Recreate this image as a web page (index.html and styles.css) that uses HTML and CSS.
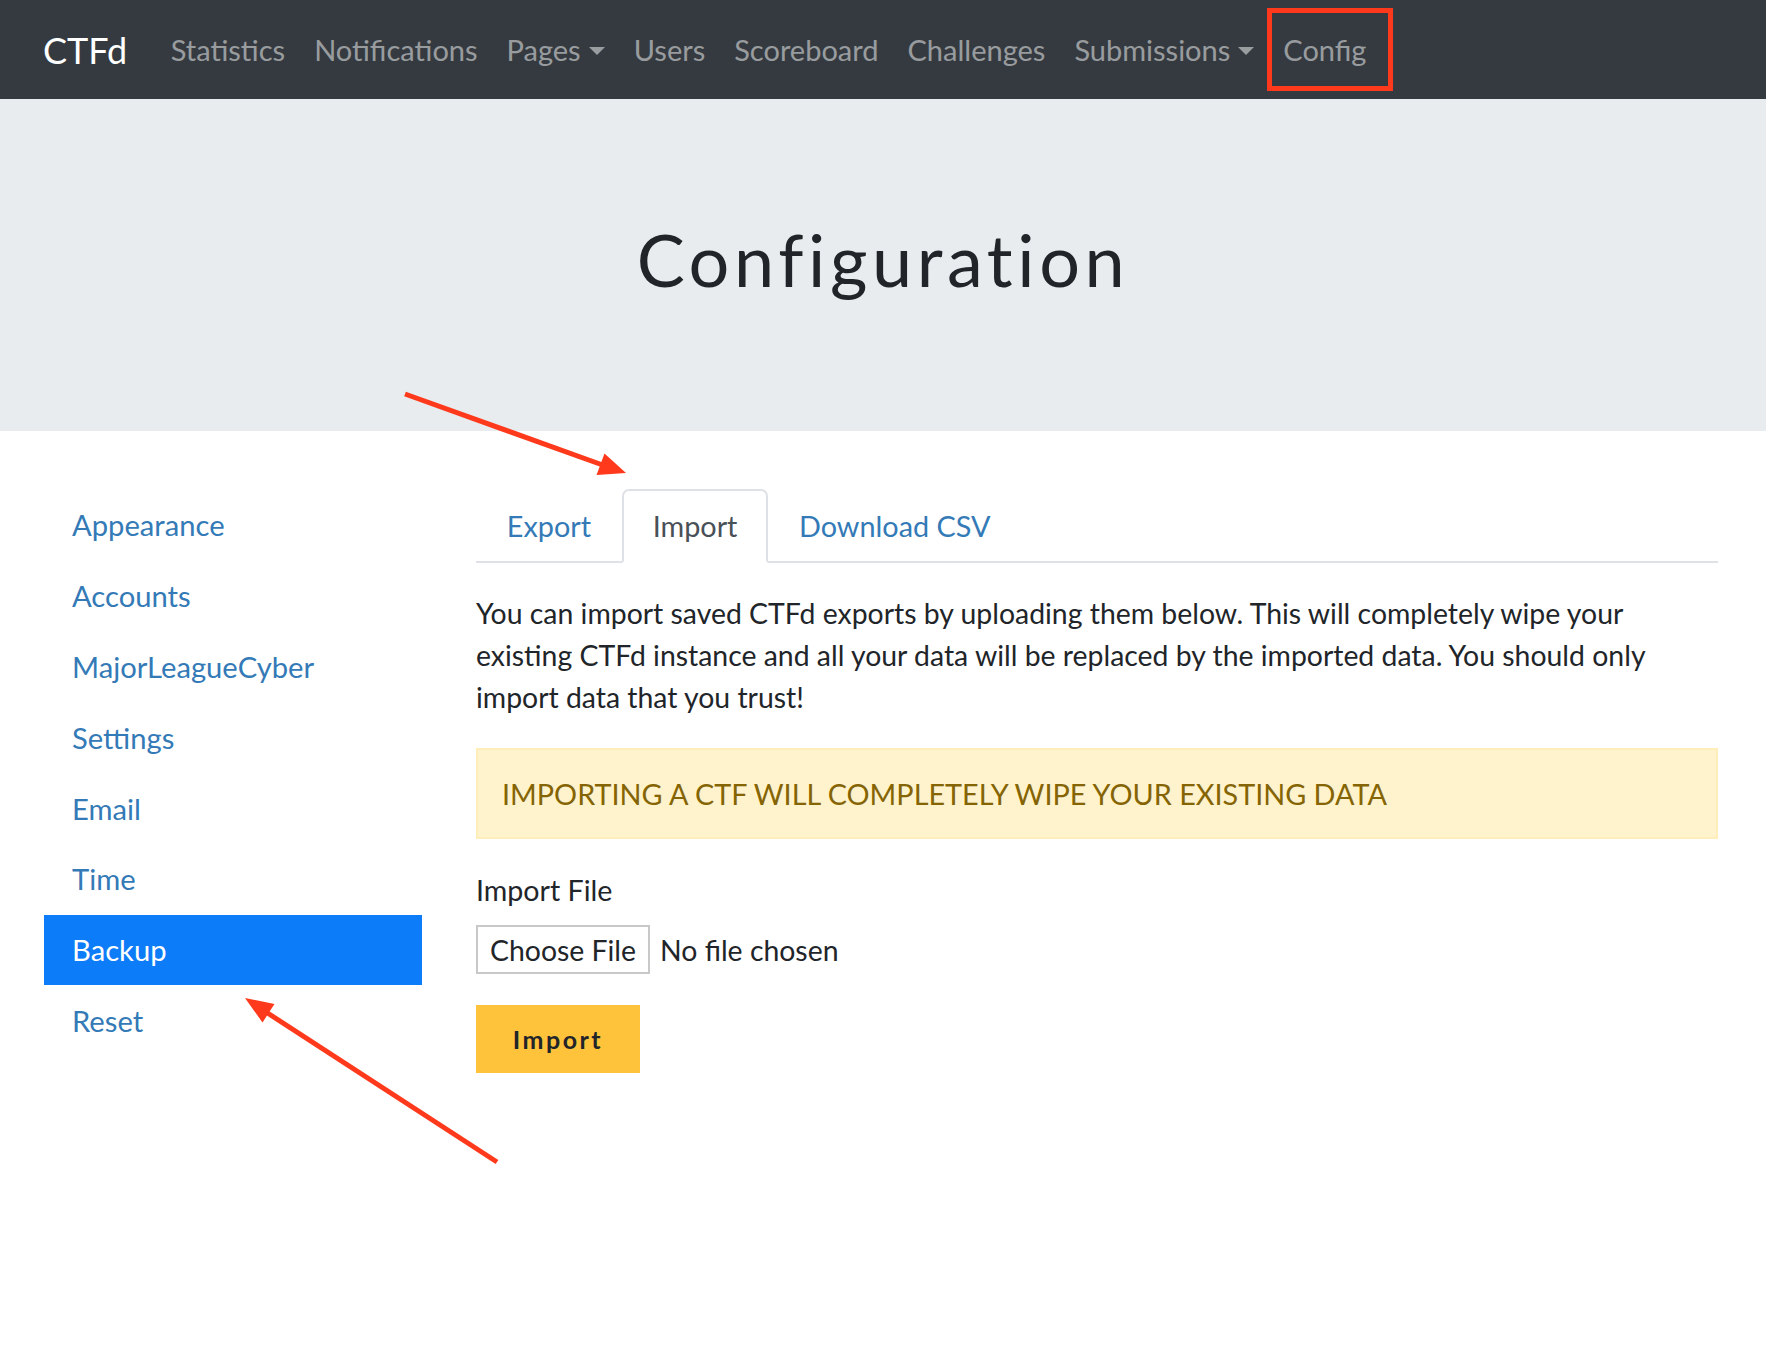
FILE: index.html
```html
<!DOCTYPE html>
<html lang="en">
<head>
<meta charset="utf-8">
<title>CTFd Admin - Configuration</title>
<link rel="stylesheet" href="styles.css">
</head>
<body>
<nav class="navbar">
  <a class="brand" href="#">CTFd</a>
  <ul class="nav-items">
    <li><a class="nav-link" href="#">Statistics</a></li>
    <li><a class="nav-link" href="#">Notifications</a></li>
    <li><a class="nav-link dropdown" href="#">Pages</a></li>
    <li><a class="nav-link" href="#">Users</a></li>
    <li><a class="nav-link" href="#">Scoreboard</a></li>
    <li><a class="nav-link" href="#">Challenges</a></li>
    <li><a class="nav-link dropdown" href="#">Submissions</a></li>
    <li><a class="nav-link" href="#">Config</a></li>
  </ul>
</nav>

<header class="jumbotron">
  <h1 class="title">Configuration</h1>
</header>

<main class="content">
  <aside class="sidebar">
    <a class="side-link" href="#">Appearance</a>
    <a class="side-link" href="#">Accounts</a>
    <a class="side-link" href="#">MajorLeagueCyber</a>
    <a class="side-link" href="#">Settings</a>
    <a class="side-link" href="#">Email</a>
    <a class="side-link" href="#">Time</a>
    <a class="side-link active" href="#">Backup</a>
    <a class="side-link" href="#">Reset</a>
  </aside>

  <section class="panel">
    <ul class="tabs">
      <li><a class="tab" href="#">Export</a></li>
      <li><a class="tab active" href="#">Import</a></li>
      <li><a class="tab" href="#">Download CSV</a></li>
    </ul>
    <div class="tab-content">
      <p class="lead-text">You can import saved CTFd exports by uploading them below. This will completely wipe your existing CTFd instance and all your data will be replaced by the imported data. You should only import data that you trust!</p>
      <div class="alert">IMPORTING A CTF WILL COMPLETELY WIPE YOUR EXISTING DATA</div>
      <div class="form-group">
        <div class="label">Import File</div>
        <div class="file-row">
          <span class="file-btn">Choose File</span>
          <span class="file-name">No file chosen</span>
        </div>
      </div>
      <button class="btn-import" type="button">Import</button>
    </div>
  </section>
</main>

<svg class="annotations" width="1766" height="1368" viewBox="0 0 1766 1368" xmlns="http://www.w3.org/2000/svg">
  <rect x="1269.5" y="10.5" width="121" height="78" fill="none" stroke="#ff3a1c" stroke-width="5"/>
  <line x1="405" y1="394" x2="604" y2="465.5" stroke="#ff3a1c" stroke-width="5"/>
  <polygon points="626,473 596.5,475 604.5,453.5" fill="#ff3a1c"/>
  <line x1="497" y1="1162" x2="266" y2="1012" stroke="#ff3a1c" stroke-width="5"/>
  <polygon points="245,998 274.5,1004 262.5,1022.5" fill="#ff3a1c"/>
</svg>
</body>
</html>
```

FILE: styles.css
```css
* {
  box-sizing: border-box;
}

html, body {
  margin: 0;
  padding: 0;
}

body {
  font-family: Lato, "Open Sans", "Liberation Sans", sans-serif;
  color: #212529;
  background: #fff;
  width: 1766px;
  height: 1368px;
  overflow: hidden;
}

a {
  text-decoration: none;
}

ul {
  list-style: none;
  margin: 0;
  padding: 0;
}

/* Navbar */
.navbar {
  height: 99px;
  background: #343a40;
  display: flex;
  align-items: center;
  padding-left: 43px;
}

.brand {
  color: #fff;
  font-size: 36px;
  line-height: 52px;
  margin-right: 29px;
}

.nav-items {
  display: flex;
  align-items: center;
}

.nav-link {
  display: block;
  padding: 0 14.5px;
  font-size: 29px;
  line-height: 42px;
  color: rgba(255, 255, 255, 0.5);
}

.nav-link.dropdown::after {
  content: "";
  display: inline-block;
  margin-left: 8px;
  vertical-align: 6px;
  border-top: 8.5px solid rgba(255, 255, 255, 0.5);
  border-left: 8.5px solid transparent;
  border-right: 8.5px solid transparent;
}

/* Jumbotron */
.jumbotron {
  height: 332px;
  background: #e9ecef;
  display: flex;
  align-items: center;
  justify-content: center;
  padding-bottom: 12px;
}

.title {
  margin: 0;
  font-size: 72px;
  font-weight: 400;
  letter-spacing: 4.6px;
  line-height: 86px;
  color: #212529;
}

/* Content */
.content {
  display: flex;
  padding: 58px 48px 0 44px;
}

.sidebar {
  width: 378px;
  flex: none;
  padding-top: 1px;
  display: flex;
  flex-direction: column;
}

.side-link {
  display: block;
  padding: 14.4px 28px;
  font-size: 29.2px;
  line-height: 42px;
  color: #337ab7;
}

.side-link.active {
  background: #0d7cf8;
  color: #fff;
}

.panel {
  flex: 1;
  margin-left: 54px;
}

.tabs {
  display: flex;
  border-bottom: 2px solid #dee2e6;
}

.tab {
  display: block;
  padding: 14px 28.8px 14px;
  font-size: 28.8px;
  line-height: 42px;
  color: #337ab7;
  border: 2px solid transparent;
  border-radius: 7px 7px 0 0;
  margin-bottom: -2px;
}

.tab.active {
  color: #495057;
  background: #fff;
  border-color: #dee2e6 #dee2e6 #fff;
}

.tab-content {
  padding-top: 29px;
}

.lead-text {
  margin: 0 0 30px;
  font-size: 28.4px;
  line-height: 42px;
}

.alert {
  padding: 22.5px 24px;
  border: 2px solid #ffeeba;
  background: #fff3cd;
  color: #856404;
  font-size: 28.8px;
  line-height: 42px;
  margin-bottom: 30px;
}

.form-group {
  margin-bottom: 31px;
}

.label {
  font-size: 28.6px;
  line-height: 42px;
  margin-bottom: 14px;
}

.file-row {
  display: flex;
  align-items: center;
  font-size: 28.4px;
}

.file-btn {
  display: inline-flex;
  align-items: center;
  height: 49px;
  padding: 0 12px;
  border: 2px solid #c8c8c8;
  background: #fff;
  color: #212529;
}

.file-name {
  margin-left: 10px;
  color: #212529;
}

.btn-import {
  display: block;
  width: 164px;
  height: 68px;
  border: none;
  border-radius: 0;
  background: #ffc23b;
  color: #212529;
  font-family: Lato, "Open Sans", sans-serif;
  font-weight: 700;
  font-size: 25px;
  letter-spacing: 2.5px;
  padding: 0;
}

/* Annotations overlay */
.annotations {
  position: absolute;
  top: 0;
  left: 0;
  pointer-events: none;
}
```
